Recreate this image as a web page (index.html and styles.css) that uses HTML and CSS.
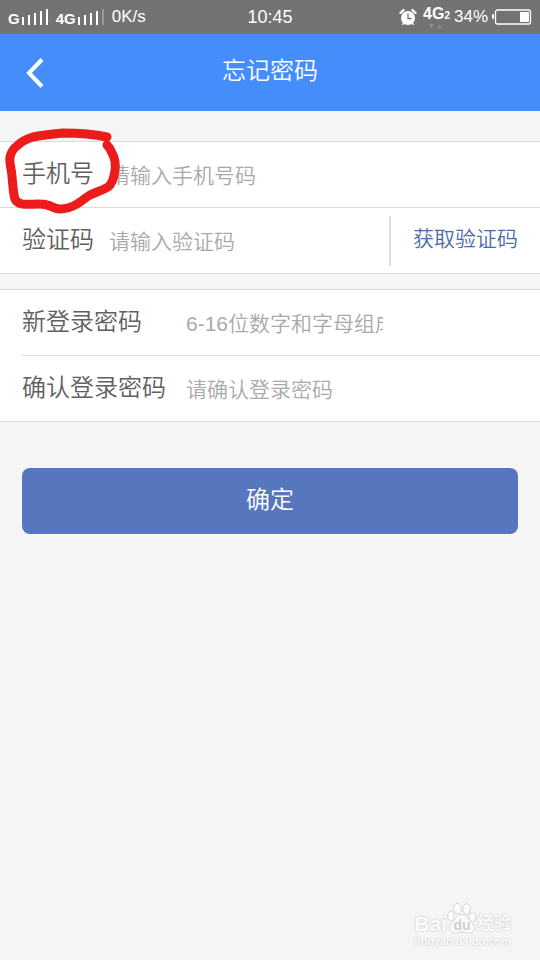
FILE: index.html
```html
<!DOCTYPE html>
<html lang="zh-CN">

<head>
  <meta charset="UTF-8" />
  <meta name="viewport" content="width=device-width, initial-scale=1" />
  <title>忘记密码</title>
  <link rel="stylesheet" href="styles.css">
</head>

<body>

  <div class="status-bar">
    <div class="status-left">
      <span class="net">G</span>
      <svg class="signal" width="28" height="18" viewBox="0 0 28 18" fill="#fff">
        <rect x="0" y="9" width="2" height="8" />
        <rect x="6" y="7" width="2" height="10" />
        <rect x="12" y="5" width="2" height="12" />
        <rect x="18" y="3" width="2" height="14" />
        <rect x="24" y="1" width="2" height="16" />
      </svg>
      <span class="net second">4G</span>
      <svg class="signal" width="28" height="18" viewBox="0 0 28 18" fill="#fff">
        <rect x="0" y="9" width="2" height="8" />
        <rect x="6" y="7" width="2" height="10" />
        <rect x="12" y="5" width="2" height="12" />
        <rect x="18" y="3" width="2" height="14" />
        <rect x="24" y="1" width="2" height="16" fill="#999" />
      </svg>
      <span class="speed">0K/s</span>
    </div>
    <div class="clock">10:45</div>
    <div class="status-right">
      <svg width="18" height="18" viewBox="0 0 18 18">
        <circle cx="9" cy="10" r="7" fill="#fff" />
        <path d="M1.500 5L4.500 2M16.500 5L13.500 2" stroke="#fff" stroke-width="2.4" stroke-linecap="round" />
        <path d="M4.500 15L3.500 17M13.500 15L14.500 17" stroke="#fff" stroke-width="1.4" />
        <path d="M9 5.500V10.500H12.500" fill="none" stroke="#737373" stroke-width="1.3" />
      </svg>
      <span class="data">
        <span class="data-type">4G<small>2</small></span>
        <svg width="14" height="5" viewBox="0 0 14 5" fill="#8c8c8c">
          <path d="M0 0h5L2.500 4.500zM8 4.500h5L10.500 0z" />
        </svg>
      </span>
      <span class="percent">34%</span>
      <svg class="battery" width="40" height="16" viewBox="0 0 40 16">
        <rect x="0" y="5" width="2" height="5" rx="1" fill="#fff" />
        <rect x="3.500" y="1" width="35" height="14" rx="2" fill="none" stroke="#fff" stroke-width="1.3" />
        <rect x="28" y="3" width="9" height="10" fill="#fff" />
      </svg>
    </div>
  </div>

  <header class="top-bar">
    <button class="back-btn" type="button" aria-label="返回">
      <svg width="20" height="32" viewBox="0 0 20 32">
        <path d="M17 2.500L4 16L17 29.500" fill="none" stroke="#fff" stroke-width="4" />
      </svg>
    </button>
    <h1>忘记密码</h1>
  </header>

  <form class="reset-form">
    <section class="group">
      <div class="row">
        <label class="label marked" for="phone">手机号
          <!-- 手绘红圈 -->
          <svg class="mark" width="120" height="88" viewBox="0 0 120 88">
            <path d="M103 9C89 6 74 5 59 5C48 6 38 7 29 9C23 11 18 13 14 17C10 20 7 24 6 29C5 35 8 43 8 49C9 57 9 65 11 71C12 74 14 75 18 76C27 77 36 75 43 77C48 78 50 81 56 81C62 81 68 79 73 76C78 73 81 70 86 67C92 64 99 62 104 59C108 56 110 49 111 43C112 35 111 30 108 25C107 22 105 19 103 17" />
          </svg>
        </label>
        <input class="field" id="phone" type="tel" placeholder="请输入手机号码">
      </div>
      <div class="row">
        <label class="label" for="code">验证码</label>
        <input class="field" id="code" type="text" placeholder="请输入验证码">
        <button class="code-btn" type="button">获取验证码</button>
      </div>
    </section>

    <section class="group wide">
      <div class="row">
        <label class="label" for="newPwd">新登录密码</label>
        <input class="field short" id="newPwd" type="password" placeholder="6-16位数字和字母组成">
      </div>
      <div class="row">
        <label class="label" for="confirmPwd">确认登录密码</label>
        <input class="field short" id="confirmPwd" type="password" placeholder="请确认登录密码">
      </div>
    </section>

    <button class="submit-btn" type="submit">确定</button>
  </form>

  <footer class="watermark">
    <div class="brand">
      <span>Bai</span>
      <svg width="30" height="32" viewBox="0 0 30 32" fill="#fcfcfc" stroke="#d6d6d6">
        <ellipse cx="4" cy="14" rx="3.300" ry="4.500" />
        <ellipse cx="10.500" cy="6.500" rx="3.800" ry="5.200" />
        <ellipse cx="19.500" cy="7" rx="3.800" ry="5.200" />
        <ellipse cx="25.500" cy="15" rx="3.500" ry="4.500" />
        <path d="M14.500 12.500C10 12.500 8 18 5 20.500C1 24 1.500 30.500 7.500 31C10 31.200 12 30 15 30C18 30 20 31.200 22.500 31C28.500 30.500 28.500 24 24.500 20.500C21 17 19 12.500 14.500 12.500Z" />
        <text x="15" y="28" text-anchor="middle" class="du">du</text>
      </svg>
      <span class="cn">经验</span>
    </div>
    <div class="site">jingyan.baidu.com</div>
  </footer>

</body>

</html>
```

FILE: styles.css
```css
* {
  box-sizing: border-box;
}

body {
  margin: 0;
  min-height: 100vh;
  display: flex;
  flex-direction: column;
  background: #f5f5f5;
  color: #606060;
  font-family: "Liberation Sans", "Noto Sans CJK SC", sans-serif;
  font-weight: 350;
}

button,
input {
  font: inherit;
}

button {
  border: none;
  background: none;
  padding: 0;
  cursor: pointer;
}

svg {
  display: block;
  flex: none;
}

/* 状态栏 */
.status-bar {
  display: grid;
  grid-template-columns: 1fr auto 1fr;
  align-items: center;
  height: 34px;
  padding: 0 8px;
  background: #737373;
  color: #fff;
  font-size: 17px;
  line-height: 20px;
}

.status-left,
.status-right {
  display: flex;
  align-items: center;
}

.status-right {
  justify-content: flex-end;
}

.net {
  padding-top: 4px;
  font-size: 15px;
  font-weight: bold;
}

.net.second {
  margin-left: 6px;
}

.signal {
  margin-left: 2px;
}

.speed {
  margin-left: 6px;
}

.clock {
  font-size: 18px;
}

.data {
  margin: 0 4px 0 6px;
}

.data-type {
  display: block;
  font-size: 16px;
  line-height: 16px;
  font-weight: bold;
}

.data-type small {
  font-size: 10px;
}

.data svg {
  margin-left: 6px;
}

.battery {
  margin-left: 4px;
}

/* 标题栏 */
.top-bar {
  display: grid;
  grid-template-columns: 45px 1fr 45px;
  align-items: center;
  height: 77px;
  background: #448dfb;
  color: #fff;
}

.top-bar h1 {
  margin: 0;
  padding-bottom: 4px;
  font-size: 24px;
  line-height: 36px;
  font-weight: inherit;
  text-align: center;
}

.back-btn {
  display: flex;
  justify-content: flex-end;
}

/* 表单 */
.reset-form {
  display: flex;
  flex-direction: column;
  padding-top: 30px;
}

.group {
  margin-bottom: 15px;
  background: #fff;
  border-top: 1px solid #dcdcdc;
  border-bottom: 1px solid #dcdcdc;
}

.row {
  display: flex;
  align-items: center;
  height: 65px;
}

.row + .row {
  height: 66px;
  border-top: 1px solid #dcdcdc;
}

.wide .row {
  margin-left: 22px;
}

.label {
  flex: none;
  width: 109px;
  padding: 0 0 2px 22px;
  font-size: 24px;
  line-height: 36px;
}

.wide .label {
  width: 164px;
  padding-left: 0;
}

.marked {
  position: relative;
}

.mark {
  position: absolute;
  left: 4px;
  top: -28px;
  pointer-events: none;
}

.mark path {
  fill: none;
  stroke: #ec1c1c;
  stroke-width: 9;
  stroke-linecap: round;
  stroke-linejoin: round;
}

.field {
  flex: 1;
  min-width: 0;
  height: 48px;
  padding: 2px 0 0;
  border: none;
  outline: none;
  background: none;
  color: #606060;
  font-size: 21px;
}

.field.short {
  flex: none;
  width: 197px;
}

.field::placeholder {
  color: #a9a9a9;
}

.code-btn {
  width: 151px;
  height: 50px;
  padding-bottom: 8px;
  border-left: 2px solid #dcdcdc;
  color: #4a6da7;
  font-size: 21px;
}

.submit-btn {
  height: 66px;
  margin: 31px 22px 0;
  padding-bottom: 8px;
  border-radius: 8px;
  background: #5677bd;
  color: #fff;
  font-size: 24px;
}

/* 水印 */
.watermark {
  align-self: flex-end;
  margin-top: auto;
  padding: 0 29px 12px 0;
  color: #fcfcfc;
  font-weight: bold;
  text-shadow: 0 0 2px #bbb;
}

.brand {
  display: flex;
  align-items: flex-end;
  font-size: 21px;
  line-height: 20px;
}

.brand .cn {
  font-size: 17px;
}

.du {
  fill: #d0d0d0;
  stroke: none;
  font-size: 14px;
  text-shadow: none;
}

.site {
  font-size: 11px;
  line-height: 14px;
}
```
